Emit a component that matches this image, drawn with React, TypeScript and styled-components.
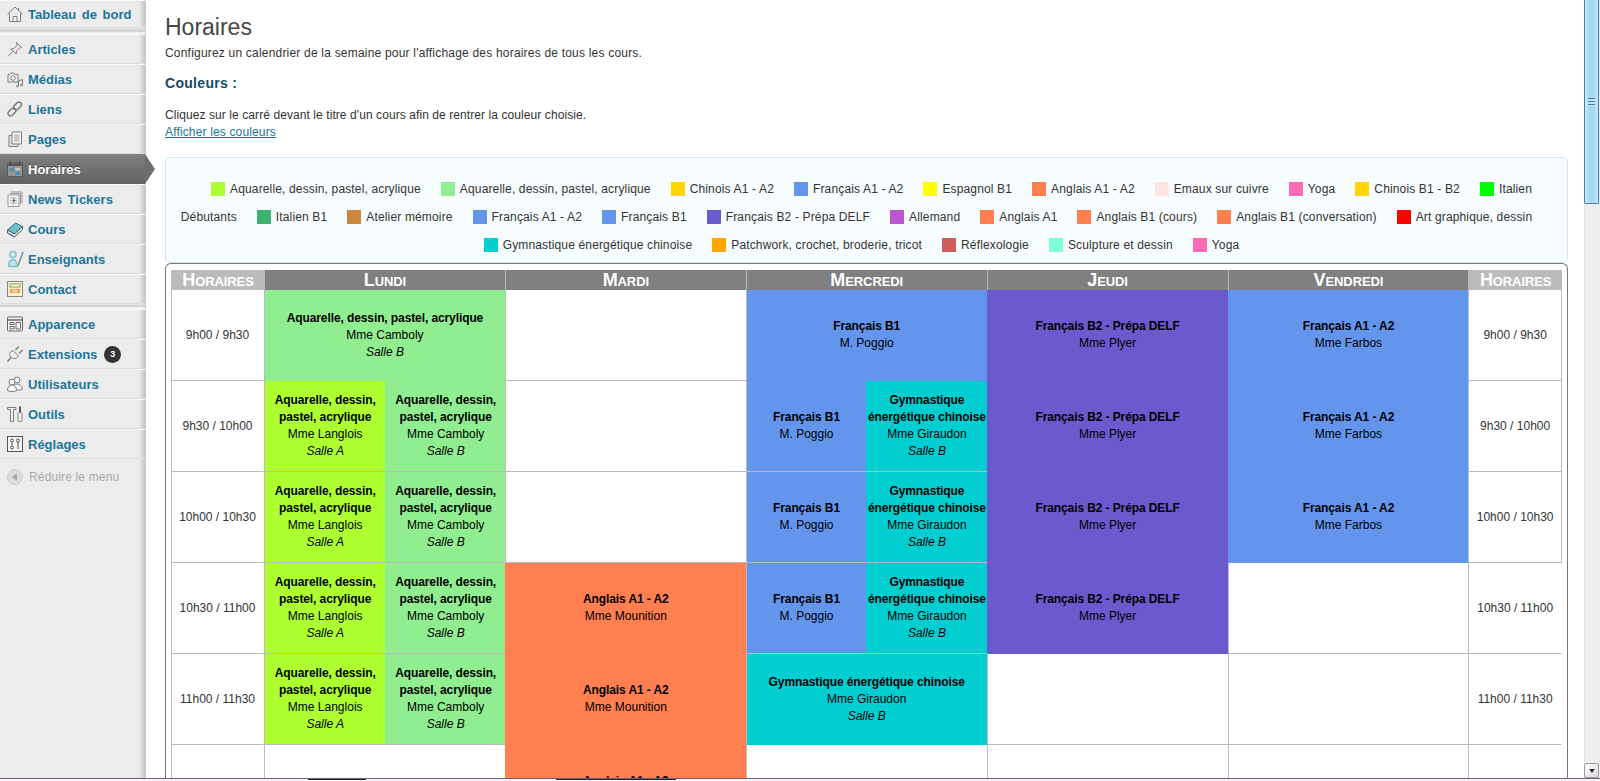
import React from 'react'
import styled, { createGlobalStyle } from 'styled-components'

const GlobalStyle = createGlobalStyle`
  html, body {
    margin: 0;
    height: 781px;
    overflow: hidden;
    background: #fff;
    font-family: "Liberation Sans", Arial, sans-serif;
    font-size: 12px;
    color: #333;
  }
`

const Page = styled.div`
  display: flex;
  flex-direction: column;
  height: 781px;
`

const Body = styled.div`
  display: flex;
  height: 778px;
  overflow: hidden;
`

const BottomStrip = styled.div`
  display: flex;
  height: 3px;
  padding-left: 308px;
  background: #faf2fa;
  border-top: 1px solid #6f5f78;
  box-sizing: border-box;
`

const StripTab = styled.div<{ $w: number; $gap: number }>`
  width: ${(p) => p.$w}px;
  margin-right: ${(p) => p.$gap}px;
  height: 2px;
  background: #fff;
  border-top: 1px solid #222;
  box-sizing: border-box;
`

const Sidebar = styled.nav`
  width: 145px;
  flex: none;
  background: #ececec;
  box-shadow: inset -6px 0 5px -4px #b8b8b8;
`

const MenuItem = styled.div<{ $active?: boolean; $first?: boolean }>`
  position: relative;
  display: flex;
  align-items: center;
  gap: 4px;
  height: ${(p) => (p.$first ? 28 : 30)}px;
  padding-left: 6px;
  box-sizing: border-box;
  border-top: 1px solid ${(p) => (p.$active ? '#808080' : '#f8f8f8')};
  border-bottom: 1px solid ${(p) => (p.$active ? '#606060' : '#dcdcdc')};
  background: ${(p) => (p.$active ? 'linear-gradient(#7f7f7f, #626262)' : 'transparent')};
  color: ${(p) => (p.$active ? '#fff' : '#21759b')};
  text-shadow: ${(p) => (p.$active ? '0 -1px 0 #3f3f3f' : 'none')};
  font-weight: bold;
  font-size: 13px;
  word-spacing: 2px;
  white-space: nowrap;

  ${(p) =>
    p.$active &&
    `&::after {
      content: '';
      position: absolute;
      left: 145px;
      top: -1px;
      width: 10px;
      height: 30px;
      background: #6e6e6e;
      clip-path: polygon(0 0, 100% 50%, 0 100%);
    }`}
`

const IconBox = styled.svg`
  width: 18px;
  height: 18px;
  flex: none;
`

const MenuSeparator = styled.div<{ $h: number }>`
  height: ${(p) => p.$h}px;
  box-sizing: border-box;
  background: #d4d4d4;
  border-top: 1px solid #e4e4e4;
  border-bottom: 2px solid #f2f2f2;
`

const Badge = styled.span`
  display: inline-flex;
  align-items: center;
  justify-content: center;
  width: 17px;
  height: 17px;
  margin-left: 3px;
  border-radius: 50%;
  background: #333;
  color: #fff;
  font-size: 9px;
  text-shadow: none;
`

const Collapse = styled.div`
  display: flex;
  align-items: center;
  gap: 6px;
  height: 35px;
  padding-left: 7px;
  font-size: 12px;
  letter-spacing: 0.15px;
  color: #aaa;
`

const CollapseDot = styled.span`
  display: flex;
  align-items: center;
  justify-content: center;
  width: 16px;
  height: 16px;
  border-radius: 50%;
  background: #dcdcdc;
  border: 1px solid #cfcfcf;
  box-sizing: border-box;

  &::before {
    content: '';
    margin-left: -2px;
    border: 4px solid transparent;
    border-left: 0;
    border-right: 5px solid #aaa;
  }
`

const Main = styled.main`
  flex: 1;
  min-width: 0;
  padding: 0 16px 0 19px;
  border-left: 1px solid #cccccc;
  overflow: hidden;
`

const Title = styled.h2`
  margin: 14px 0 0;
  font-size: 23px;
  line-height: 27px;
  font-weight: normal;
  color: #464646;
`

const Intro = styled.p`
  margin: 4px 0 0;
  line-height: 16px;
  letter-spacing: 0.2px;
`

const SectionTitle = styled.h3`
  margin: 14px 0 0;
  font-size: 14px;
  line-height: 17px;
  letter-spacing: 0.3px;
  font-weight: bold;
  color: #154a68;
`

const Hint = styled.p`
  margin: 15px 0 0;
  line-height: 16px;
  letter-spacing: 0.08px;
`

const ToggleLink = styled.a`
  display: block;
  margin-top: 1px;
  line-height: 16px;
  letter-spacing: 0.15px;
  color: #21759b;
  text-decoration: underline;
`

const Legend = styled.div`
  margin-top: 17px;
  height: 106px;
  padding: 17px 8px 0;
  box-sizing: border-box;
  border: 1px solid #cfe5f0;
  border-radius: 5px;
  background: #f7fcfe;
  line-height: 28px;
  letter-spacing: 0.15px;
  text-align: center;
  color: #333;
`

const LegendItem = styled.span<{ $end?: boolean }>`
  margin-right: ${(p) => (p.$end ? 20 : 6.5)}px;
`

const Swatch = styled.span<{ $color: string }>`
  display: inline-block;
  width: 14px;
  height: 14px;
  margin: 0 5px 0 10px;
  vertical-align: -3px;
  background: ${(p) => p.$color};
`

const TableBox = styled.div`
  padding: 6px 5px 0;
  border: 1px solid #777;
  border-bottom: 0;
  border-radius: 6px 6px 0 0;
  background: #fff;
`

const Schedule = styled.div`
  display: grid;
  grid-template-columns: 93px 121.4px 119.5px repeat(8, 120.45px) 93.5px;
  grid-template-rows: 20px;
  grid-auto-rows: 91px;
`

const HeadCell = styled.div<{ $time?: boolean }>`
  grid-column: span ${(p) => (p.$time ? 1 : 2)};
  display: flex;
  align-items: center;
  justify-content: center;
  box-sizing: border-box;
  background: ${(p) => (p.$time ? '#bbbbbb' : '#808080')};
  border-left: 1px solid ${(p) => (p.$time ? 'transparent' : '#bbb')};
  color: #fff;
  font-size: 18px;
  letter-spacing: -0.1px;
  font-weight: bold;
  font-variant: small-caps;
  line-height: 20px;
`

const TimeCell = styled.div<{ $right?: boolean; $left?: boolean }>`
  display: flex;
  align-items: center;
  justify-content: center;
  box-sizing: border-box;
  border-left: 1px solid ${(p) => (p.$left ? '#bbb' : 'transparent')};
  border-right: 1px solid ${(p) => (p.$right ? '#bbb' : 'transparent')};
  border-bottom: 1px solid #bbb;
`

const Slot = styled.div<{ $span: number; $bg?: string; $open?: boolean; $edge?: boolean }>`
  grid-column: span ${(p) => p.$span};
  display: flex;
  flex-direction: column;
  align-items: center;
  justify-content: center;
  box-sizing: border-box;
  text-align: center;
  line-height: 17px;
  color: #000;
  background: ${(p) => p.$bg ?? '#fff'};
  border-left: 1px solid ${(p) => (p.$edge ? '#bbb' : 'transparent')};
  border-bottom: 1px solid ${(p) => (p.$open ? 'transparent' : '#bbb')};
`

const CourseName = styled.strong`
  font-weight: bold;
  letter-spacing: -0.1px;
`

const Room = styled.em`
  font-style: italic;
`

const Scrollbar = styled.div`
  width: 16px;
  flex: none;
  display: flex;
  flex-direction: column;
  justify-content: space-between;
  background: #eeeeee;
  border-left: 1px solid #e2e2e2;
  box-sizing: border-box;
`

const ScrollThumb = styled.div`
  display: flex;
  align-items: center;
  justify-content: center;
  width: 15px;
  height: 204px;
  padding-top: 0;
  box-sizing: border-box;
  border: 1px solid #3c7fb1;
  border-top: 0;
  border-radius: 0 0 2px 2px;
  background: linear-gradient(90deg, #d4ecfb, #a6d8f4 30%, #a6d8f4 70%, #cbe8fa);
  margin-left: -1px;
`

const ScrollGrip = styled.div`
  width: 7px;
  height: 8px;
  background: repeating-linear-gradient(#3f7fa6 0 1px, #c4e4f7 1px 3px);
`

const ScrollButton = styled.div`
  display: flex;
  align-items: center;
  justify-content: center;
  width: 15px;
  height: 15px;
  margin-left: -1px;
  box-sizing: border-box;
  border: 1px solid #9a9a9a;
  border-radius: 2px;
  background: linear-gradient(135deg, #fff, #d8d8d8);

  &::before {
    content: '';
    border: 3px solid transparent;
    border-bottom: 0;
    border-top: 4px solid #333;
  }
`

const Icon = ({ name }: { name: string }) => {
  const g = '#7d7d7d'
  const l = '#d8d8d8'
  switch (name) {
    case 'home':
      return (
        <IconBox viewBox="0 0 18 18" fill="none" stroke={g}>
          <path d="M1.500 9 9 2l7.500 7" />
          <path d="M3.500 8v8.500h11V8" fill="#f4f4f4" />
          <path d="M7 16.500v-5h4v5M12.500 3v2.500" />
          <path d="M5.500 9h7" stroke={l} />
        </IconBox>
      )
    case 'pin':
      return (
        <IconBox viewBox="0 0 18 18" fill="none" stroke={g}>
          <path d="M10.500 2.500l5 5-2 .5-3 3-.5 3-5-5 3-.5 3-3z" fill="#ececec" />
          <path d="M6.500 11.500 2 16.500" />
        </IconBox>
      )
    case 'media':
      return (
        <IconBox viewBox="0 0 18 18" fill="none" stroke={g}>
          <path d="M2 4.500h2l1-1.500h3l1 1.500h3v7.500H2z" fill="#f2f2f2" />
          <circle cx="7" cy="8" r="2.300" />
          <path d="M12.500 11v5M16.500 9.500v5.500M12.500 11l4-1.500" />
          <circle cx="11.500" cy="16" r="1" />
          <circle cx="15.500" cy="15" r="1" />
        </IconBox>
      )
    case 'link':
      return (
        <IconBox viewBox="0 0 18 18" fill="none" stroke={g} strokeWidth="1.500">
          <rect x="9" y="1.500" width="5" height="9" rx="2.500" transform="rotate(45 11.500 6)" />
          <rect x="3.500" y="7.500" width="5" height="9" rx="2.500" transform="rotate(45 6 12)" />
        </IconBox>
      )
    case 'pages':
      return (
        <IconBox viewBox="0 0 18 18" fill="none" stroke={g}>
          <path d="M3 5.500h9v11H3z" fill="#e2e2e2" />
          <path d="M6 2h9.500v12H6z" fill="#f8f8f8" />
          <path d="M8 5h5.500M8 7h5.500M8 9h5.500M8 11h5.500" stroke="#9a9a9a" />
        </IconBox>
      )
    case 'calendar':
      return (
        <IconBox viewBox="0 0 18 18" fill="none">
          <rect x="1.500" y="3" width="15" height="13.500" fill="#9a968c" stroke="#55585a" />
          <path d="M2 3.500h14v2.500H2z" fill="#4a5a68" />
          <rect x="3.500" y="8" width="4.500" height="3.500" fill="#4b8fb5" />
          <rect x="9.500" y="11.500" width="4.500" height="3.500" fill="#4b8fb5" />
          <rect x="9.500" y="8" width="4.500" height="2.500" fill="#c8c8c0" />
          <path d="M4.500 1.500v3M13.500 1.500v3" stroke="#3a3a3a" />
        </IconBox>
      )
    case 'news':
      return (
        <IconBox viewBox="0 0 18 18" fill="none" stroke="#999">
          <path d="M5 2h11v11" />
          <path d="M3.500 3.500h11v11" />
          <rect x="2" y="5" width="11" height="11.500" fill="#f6f6f6" />
          <path d="M4 8h7M4 10.500h7M4 13h7M7.500 7v8" stroke="#aaa" />
          <rect x="7" y="9.500" width="2" height="2" fill="#555" stroke="none" />
        </IconBox>
      )
    case 'book':
      return (
        <IconBox viewBox="0 0 18 18" fill="none">
          <path d="M1.500 10 9.500 3l7 3.500-8 7.500z" fill="#6cc0c8" stroke="#3d6f7a" />
          <path d="M1.500 10v3l7 4 8-7.500V6.500l-8 7.500z" fill="#e4e4e4" stroke="#4d5f66" />
          <path d="M1.500 13l7 4" stroke="#3d6f7a" />
        </IconBox>
      )
    case 'teacher':
      return (
        <IconBox viewBox="0 0 18 18" fill="none" stroke="#7cc4cc" strokeWidth="1.500">
          <circle cx="7" cy="4.500" r="3" />
          <path d="M3 16.500c-1-4 1-7 4-7s4 3 4 7z" fill="#bfe3e6" />
          <path d="M17 2l-5 14" stroke="#7a8f96" />
        </IconBox>
      )
    case 'contact':
      return (
        <IconBox viewBox="0 0 18 18" fill="none">
          <rect x="1.500" y="1.500" width="15" height="15" fill="#f5f1c8" stroke="#888" />
          <rect x="4" y="4" width="10" height="3" fill="#fbfbe8" stroke="#8f9a50" />
          <rect x="4" y="9" width="10" height="4" fill="#f0a060" />
          <path d="M6 11h5M9.500 9.800 11 11l-1.500 1.200" stroke="#fff" />
        </IconBox>
      )
    case 'appearance':
      return (
        <IconBox viewBox="0 0 18 18" fill="none" stroke="#666">
          <rect x="1.500" y="2" width="15" height="14" rx="1" fill="#f4f4f4" />
          <path d="M1.500 5h15" strokeWidth="1.500" />
          <path d="M4 7.500h4v2H4zM4 11.500h4v2.500H4zM10 7.500h4.500v6.500H10z" />
        </IconBox>
      )
    case 'plugin':
      return (
        <IconBox viewBox="0 0 18 18" fill="none" stroke={g}>
          <path d="M7 5.500 12.500 11l-2 2c-2 1-4 .5-5.500-1S3 8.500 4.500 7z" fill="#f0f0f0" />
          <path d="M9.500 5 13 1.500M13 8.500 16.500 5" strokeWidth="1.500" />
          <path d="M5 12.500 1.500 16.500" strokeWidth="1.500" />
        </IconBox>
      )
    case 'users':
      return (
        <IconBox viewBox="0 0 18 18" fill="none" stroke={g}>
          <circle cx="11" cy="5" r="3" fill="#f2f2f2" />
          <path d="M7 14c0-3 2-5 4-5s5 1.500 5.500 5c-1 1.500-8.500 1.500-9.500 0z" fill="#f2f2f2" />
          <circle cx="6" cy="7" r="3" fill="#f8f8f8" />
          <path d="M1.500 15.500c0-3.500 2-5.500 4.500-5.500s4.500 2 4.500 5.500c-2 1.500-7 1.500-9 0z" fill="#f8f8f8" />
        </IconBox>
      )
    case 'tools':
      return (
        <IconBox viewBox="0 0 18 18" fill="none" stroke={g}>
          <path d="M1.500 2.500h8.500v2H7.500v12h-3v-12H1.500z" fill="#f2f2f2" />
          <path d="M14 1.500v5.500" strokeWidth="2" stroke="#555" />
          <rect x="12" y="7.500" width="4" height="9" rx="1.200" fill="#f2f2f2" />
        </IconBox>
      )
    default:
      return (
        <IconBox viewBox="0 0 18 18" fill="none" stroke="#555">
          <rect x="1.500" y="1.500" width="15" height="15" fill="#f4f4f4" />
          <circle cx="6" cy="5.500" r="1.500" />
          <path d="M6 7v3.500" />
          <circle cx="6" cy="12.500" r="1.500" />
          <circle cx="12" cy="5.500" r="1.500" />
          <path d="M12 7v7" />
        </IconBox>
      )
  }
}

const LIME = '#adff2f'
const GREEN = '#90ee90'
const BLUE = '#6495ed'
const TEAL = '#00ced1'
const PURPLE = '#6a5acd'
const CORAL = '#ff7f50'

const legend: [string, string, boolean?][] = [
  [LIME, 'Aquarelle, dessin, pastel, acrylique'],
  [GREEN, 'Aquarelle, dessin, pastel, acrylique'],
  ['#ffd700', 'Chinois A1 - A2'],
  [BLUE, 'Français A1 - A2'],
  ['#ffff00', 'Espagnol B1'],
  [CORAL, 'Anglais A1 - A2'],
  ['#ffe4e1', 'Emaux sur cuivre'],
  ['#ff69b4', 'Yoga'],
  ['#ffd700', 'Chinois B1 - B2'],
  ['#00ff00', 'Italien Débutants'],
  ['#3cb371', 'Italien B1'],
  ['#cd853f', 'Atelier mémoire'],
  [BLUE, 'Français A1 - A2'],
  [BLUE, 'Français B1'],
  [PURPLE, 'Français B2 - Prépa DELF'],
  ['#ba55d3', 'Allemand'],
  [CORAL, 'Anglais A1'],
  [CORAL, 'Anglais B1 (cours)'],
  [CORAL, 'Anglais B1 (conversation)'],
  ['#ff0000', 'Art graphique, dessin', true],
  [TEAL, 'Gymnastique énergétique chinoise'],
  ['#ffa500', 'Patchwork, crochet, broderie, tricot'],
  ['#cd5c5c', 'Réflexologie'],
  ['#7fffd4', 'Sculpture et dessin'],
  ['#ff69b4', 'Yoga', true],
]

type Course = {
  span: number
  bg?: string
  title?: string
  teacher?: string
  room?: string
  open?: boolean
  edge?: boolean
}

const empty = (span = 2): Course => ({ span, edge: true })
const aqA: Course = { span: 1, bg: LIME, title: 'Aquarelle, dessin, pastel, acrylique', teacher: 'Mme Langlois', room: 'Salle A', edge: true }
const aqB: Course = { span: 1, bg: GREEN, title: 'Aquarelle, dessin, pastel, acrylique', teacher: 'Mme Camboly', room: 'Salle B' }
const frB1: Course = { span: 1, bg: BLUE, title: 'Français B1', teacher: 'M. Poggio', edge: true }
const gym: Course = { span: 1, bg: TEAL, title: 'Gymnastique énergétique chinoise', teacher: 'Mme Giraudon', room: 'Salle B' }
const mardi: Course = { span: 2, bg: CORAL, title: 'Anglais A1 - A2', teacher: 'Mme Mounition', open: true }
const jeudi: Course = { span: 2, bg: PURPLE, title: 'Français B2 - Prépa DELF', teacher: 'Mme Plyer', open: true }
const vendredi: Course = { span: 2, bg: BLUE, title: 'Français A1 - A2', teacher: 'Mme Farbos', open: true }

const rows: { time: string; closed?: boolean; cells: Course[] }[] = [
  {
    time: '9h00 / 9h30',
    closed: true,
    cells: [
      { span: 2, bg: GREEN, title: 'Aquarelle, dessin, pastel, acrylique', teacher: 'Mme Camboly', room: 'Salle B', edge: true, open: true },
      empty(),
      { span: 2, bg: BLUE, title: 'Français B1', teacher: 'M. Poggio', edge: true, open: true },
      jeudi,
      vendredi,
    ],
  },
  { time: '9h30 / 10h00', closed: true, cells: [aqA, aqB, empty(), frB1, gym, jeudi, vendredi] },
  { time: '10h00 / 10h30', closed: true, cells: [aqA, aqB, empty(), frB1, gym, jeudi, vendredi] },
  { time: '10h30 / 11h00', cells: [aqA, aqB, mardi, frB1, gym, jeudi, empty()] },
  {
    time: '11h00 / 11h30',
    cells: [
      aqA,
      aqB,
      mardi,
      { span: 2, bg: TEAL, title: 'Gymnastique énergétique chinoise', teacher: 'Mme Giraudon', room: 'Salle B', open: true, edge: true },
      empty(),
      empty(),
    ],
  },
  { time: '', cells: [empty(), mardi, empty(), empty(), empty()] },
]

const days = ['Lundi', 'Mardi', 'Mercredi', 'Jeudi', 'Vendredi']

const menuTop = [['pin', 'Articles'], ['media', 'Médias'], ['link', 'Liens'], ['pages', 'Pages'], ['calendar', 'Horaires'], ['news', 'News Tickers'], ['book', 'Cours'], ['teacher', 'Enseignants'], ['contact', 'Contact']]
const menuBottom = [['appearance', 'Apparence'], ['plugin', 'Extensions'], ['users', 'Utilisateurs'], ['tools', 'Outils'], ['settings', 'Réglages']]

function App() {
  return (
    <Page>
      <GlobalStyle />
      <Body>
        <Sidebar>
          <MenuItem $first>
            <Icon name="home" />
            Tableau de bord
          </MenuItem>
          <MenuSeparator $h={6} />
          {menuTop.map(([icon, label]) => (
            <MenuItem key={label} $active={label === 'Horaires'}>
              <Icon name={icon} />
              {label}
            </MenuItem>
          ))}
          <MenuSeparator $h={5} />
          {menuBottom.map(([icon, label]) => (
            <MenuItem key={label}>
              <Icon name={icon} />
              {label}
              {label === 'Extensions' && <Badge>3</Badge>}
            </MenuItem>
          ))}
          <Collapse>
            <CollapseDot />
            Réduire le menu
          </Collapse>
        </Sidebar>
        <Main>
          <Title>Horaires</Title>
          <Intro>Configurez un calendrier de la semaine pour l'affichage des horaires de tous les cours.</Intro>
          <SectionTitle>Couleurs :</SectionTitle>
          <Hint>Cliquez sur le carré devant le titre d'un cours afin de rentrer la couleur choisie.</Hint>
          <ToggleLink>Afficher les couleurs</ToggleLink>
          <Legend>
            {legend.map(([color, label, end], i) => (
              <React.Fragment key={i}>
                <Swatch $color={color} />
                <LegendItem $end={end}>{label}</LegendItem>{' '}
              </React.Fragment>
            ))}
          </Legend>
          <TableBox>
            <Schedule>
              <HeadCell $time>Horaires</HeadCell>
              {days.map((d) => (
                <HeadCell key={d}>{d}</HeadCell>
              ))}
              <HeadCell $time>Horaires</HeadCell>
              {rows.map((row, r) => (
                <React.Fragment key={r}>
                  <TimeCell $left>{row.time}</TimeCell>
                  {row.cells.map((c, i) => (
                    <Slot key={i} $span={c.span} $bg={c.bg} $open={c.open} $edge={c.edge}>
                      {c.title && <CourseName>{c.title}</CourseName>}
                      {c.teacher && <span>{c.teacher}</span>}
                      {c.room && <Room>{c.room}</Room>}
                    </Slot>
                  ))}
                  <TimeCell $left $right={row.closed}>{row.time}</TimeCell>
                </React.Fragment>
              ))}
            </Schedule>
          </TableBox>
        </Main>
        <Scrollbar>
          <ScrollThumb>
            <ScrollGrip />
          </ScrollThumb>
          <ScrollButton />
        </Scrollbar>
      </Body>
      <BottomStrip>
        <StripTab $w={58} $gap={190} />
        <StripTab $w={60} $gap={0} />
        <StripTab $w={60} $gap={0} />
      </BottomStrip>
    </Page>
  )
}

export default App
